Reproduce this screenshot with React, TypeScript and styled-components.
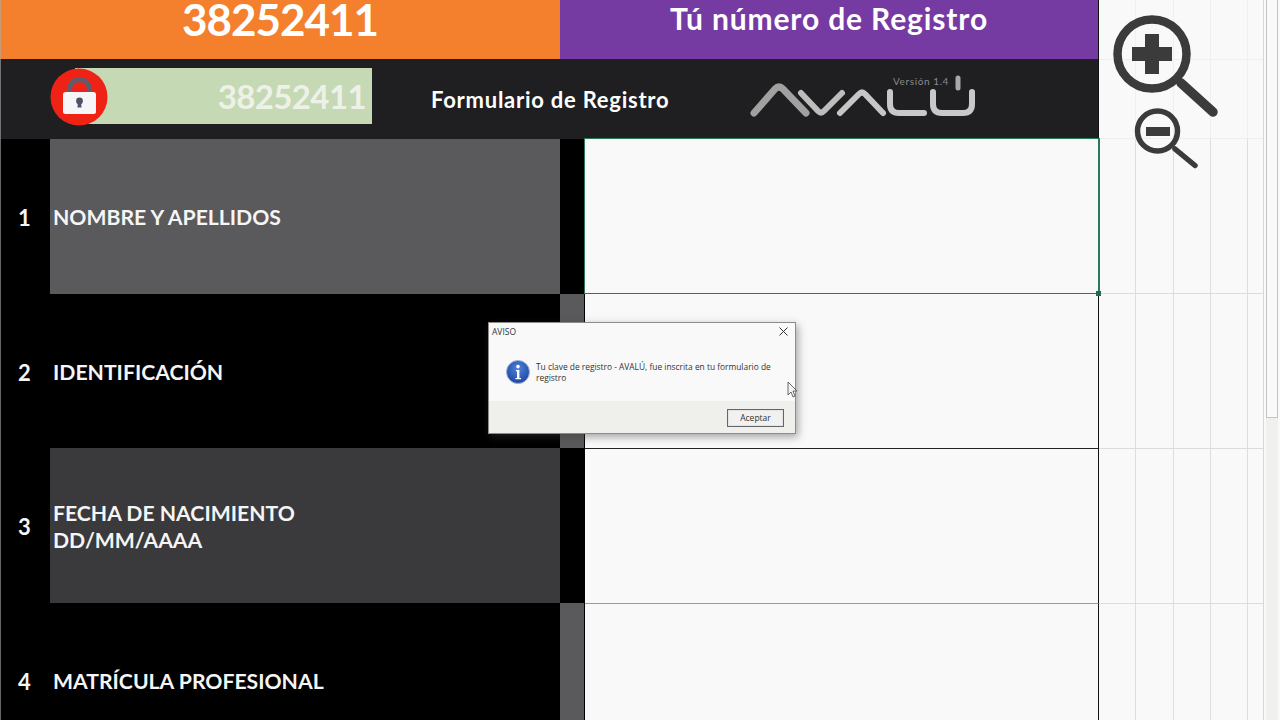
import styled, { createGlobalStyle } from 'styled-components';

const GlobalStyle = createGlobalStyle`
  html, body {
    margin: 0;
    width: 1280px;
    height: 720px;
    overflow: hidden;
    background: #f9f9f9;
    font-family: Lato, "Open Sans", sans-serif;
  }
  * { box-sizing: border-box; }
`;

const GREEN = '#2a7a5a';

const S = {
  Page: styled.div`
    position: relative;
    display: flex;
    width: 1280px;
    height: 720px;
    overflow: hidden;

    &::after {
      content: '';
      position: absolute;
      left: 0;
      top: 0;
      width: 1px;
      height: 720px;
      background: rgba(170, 170, 170, 0.6);
    }
  `,
  Main: styled.div`
    width: 1099px;
    flex: none;
    display: flex;
    flex-direction: column;
  `,
  TopBar: styled.div`
    display: grid;
    flex: none;
    grid-template-columns: 560px 1fr;
    height: 59px;
    border-right: 1px solid #111;
    color: #fff;
    font-weight: 700;
  `,
  Counter: styled.div`
    background: #f47f2c;
    font-size: 44px;
    line-height: 38px;
    text-align: center;
    letter-spacing: -1px;
  `,
  TopTitle: styled.div`
    background: #763aa3;
    font-size: 30px;
    line-height: 37px;
    text-align: center;
    letter-spacing: 0.85px;
  `,
  Header: styled.div`
    display: flex;
    flex: none;
    align-items: center;
    height: 80px;
    padding-bottom: 6px;
    border-right: 1px solid #111;
    background: #1f1e20;
    color: #fff;
  `,
  Field: styled.div`
    position: relative;
    width: 297px;
    height: 56px;
    margin-left: 75px;
    padding-right: 6px;
    background: #c6d9b5;
    color: #eef1e8;
    font-size: 33px;
    font-weight: 700;
    line-height: 56px;
    letter-spacing: -0.6px;
    text-align: right;
  `,
  LockBadge: styled.svg`
    position: absolute;
    left: -25px;
    top: 0;
    width: 58px;
    height: 58px;
  `,
  FormTitle: styled.div`
    margin: 6px 0 0 59px;
    width: 240px;
    font-size: 22px;
    font-weight: 700;
    letter-spacing: 0.75px;
    white-space: nowrap;
  `,
  Logo: styled.svg`
    margin: 4px 0 0 69px;
    width: 250px;
    height: 60px;
    flex: none;
  `,
  Row: styled.div<{ $h: number }>`
    display: grid;
    flex: none;
    grid-template-columns: 50px 510px 24px 1fr;
    height: ${(p) => p.$h}px;
    background: #000;
    color: #f5f5f5;
  `,
  Num: styled.div`
    display: flex;
    align-items: center;
    padding: 2px 0 0 18px;
    font-size: 22px;
    font-weight: 700;
  `,
  Label: styled.div<{ $bg: string }>`
    display: flex;
    align-items: center;
    padding: 2px 0 0 3px;
    background: ${(p) => p.$bg};
    font-size: 21.2px;
    font-weight: 700;
    line-height: 27px;
    white-space: pre-line;
  `,
  Gutter: styled.div<{ $bg: string }>`
    background: ${(p) => p.$bg};
  `,
  Input: styled.div<{ $edge: string }>`
    margin-left: 1px;
    background: #f9f9f9;
    border-right: 1px solid #111;
    border-top: 1px solid ${(p) => p.$edge};
  `,
  SelectedInput: styled.div`
    position: relative;
    margin-top: -1px;
    background: #f9f9f9;
    border: 1px solid ${GREEN};
    box-shadow: 1px 0 0 ${GREEN};
  `,
  Handle: styled.span`
    position: absolute;
    right: -3px;
    bottom: -3px;
    width: 5px;
    height: 5px;
    background: #1f6b4c;
  `,
  Side: styled.div`
    flex: 1;
    display: flex;
    flex-direction: column;
  `,
  SideRow: styled.div<{ $h: number; $faint?: boolean }>`
    display: grid;
    flex: none;
    grid-template-columns: 37px 38px 37px 37px 15px;
    height: ${(p) => p.$h}px;
    border-bottom: 1px solid ${(p) => (p.$faint ? '#eeeeee' : '#dcdcdc')};
    margin-right: 17px;
  `,
  SideCell: styled.div<{ $faint?: boolean }>`
    border-right: 1px solid ${(p) => (p.$faint ? '#f0f0f0' : '#dedede')};
  `,
  Scrollbar: styled.div`
    position: absolute;
    right: 0;
    top: 0;
    width: 17px;
    height: 720px;
    display: flex;
    flex-direction: column;
    padding: 0 2px;
    background: #f9f9f9;
    border-left: 1px solid #d8d8d8;
  `,
  Thumb: styled.div`
    flex: none;
    height: 418px;
    background: #f9f9f9;
    border: 1px solid #c4c4c4;
    border-top: none;
  `,
  Track: styled.div`
    flex: 1;
    background: #f0f0ee;
  `,
  ZoomIcons: styled.svg`
    position: absolute;
    left: 1100px;
    top: 0;
    width: 130px;
    height: 180px;
  `,
  Dialog: styled.div`
    position: absolute;
    left: 488px;
    top: 322px;
    width: 308px;
    height: 112px;
    display: flex;
    flex-direction: column;
    background: #f9f9f9;
    border: 1px solid #8c8c8c;
    box-shadow: 2px 3px 8px rgba(60, 60, 60, 0.45);
    font-family: "Open Sans", "Noto Sans", sans-serif;
    color: #333;
  `,
  DialogTitle: styled.div`
    display: flex;
    flex: none;
    align-items: center;
    justify-content: space-between;
    height: 17px;
    padding: 0 7px 0 3px;
    font-size: 8.5px;
  `,
  DialogBody: styled.div`
    flex: 1;
    display: flex;
    align-items: flex-start;
    gap: 6px;
    padding: 20px 20px 0 17px;
    font-size: 8.4px;
    line-height: 10.5px;
  `,
  InfoIcon: styled.svg`
    width: 24px;
    height: 24px;
    flex: none;
  `,
  Message: styled.div`
    padding-top: 2px;
  `,
  DialogFooter: styled.div`
    display: flex;
    flex: none;
    justify-content: flex-end;
    align-items: flex-start;
    height: 32px;
    padding: 8px 11px 0 0;
    background: #efefec;
  `,
  OkButton: styled.div`
    width: 57px;
    height: 18px;
    border: 1px solid #666;
    box-shadow: inset 0 0 0 1px #e4e4e4;
    background: #f1f1f1;
    font-size: 8.5px;
    line-height: 16px;
    text-align: center;
  `,
  Cursor: styled.svg`
    position: absolute;
    left: 787px;
    top: 381px;
    width: 11px;
    height: 17px;
  `,
};

const rows = [
  { n: 1, label: 'NOMBRE Y APELLIDOS', h: 155, bg: '#5a595b', gutter: '#000', edge: GREEN, selected: true },
  { n: 2, label: 'IDENTIFICACIÓN', h: 154, bg: '#000', gutter: '#5a595b', edge: 'transparent' },
  { n: 3, label: 'FECHA DE NACIMIENTO\nDD/MM/AAAA', h: 155, bg: '#3a393b', gutter: '#000', edge: '#222' },
  { n: 4, label: 'MATRÍCULA PROFESIONAL', h: 155, bg: '#000', gutter: '#5a595b', edge: '#9a9a9a' },
];

const sideRows = [
  { h: 60, faint: true },
  { h: 79, faint: true },
  { h: 155 },
  { h: 155 },
  { h: 155 },
  { h: 155 },
];

const LockIcon = () => (
  <S.LockBadge viewBox="0 0 58 58">
    <circle cx="29" cy="29" r="28.5" fill="#ee2316" />
    <path d="M19.5 26v-4.5a10 10 0 0 1 20 0V26" fill="none" stroke="#5f5c70" strokeWidth="5" />
    <rect x="13" y="24" width="33" height="22" rx="2.5" fill="#f6f6f8" />
    <circle cx="29.5" cy="33" r="3.4" fill="#4d5266" />
    <path d="M28.1 34h2.8l.7 5.5h-4.2z" fill="#4d5266" />
  </S.LockBadge>
);

const AvaluLogo = () => (
  <S.Logo viewBox="0 0 250 60">
    <g fill="none" strokeLinecap="round" strokeLinejoin="round" strokeWidth="6">
      <path d="M14 45 35 21q4-4 8 0l23 24" stroke="#a1a1a1" strokeWidth="7" />
      <path d="M61 25 78 43q3 3 6 0l18-18" stroke="#bdbdbd" />
      <path d="M100 45 119 26q3-3 6 0l18 19" stroke="#c6c6c6" />
      <path d="M150 24v12q0 9 9 9h25" stroke="#c8c8c8" />
      <path d="M193 24v12q0 9 9 9h21q9 0 9-9V24" stroke="#c8c8c8" />
      <path d="M218 10v10" stroke="#a8a8a8" strokeWidth="5" />
    </g>
    <text x="153" y="17" fontFamily="Lato, sans-serif" fontSize="10" letterSpacing="0.6" fill="#8a8a8a">
      Versión 1.4
    </text>
  </S.Logo>
);

const ZoomGlyphs = () => (
  <S.ZoomIcons viewBox="0 0 130 180">
    <g fill="none" stroke="#3b3b3b" strokeLinecap="round">
      <circle cx="52" cy="54" r="34.5" strokeWidth="8.5" />
      <path d="M81 83l32 29" strokeWidth="9.5" />
      <circle cx="57.5" cy="131" r="20" strokeWidth="5.5" />
      <path d="M75 149l20 16.5" strokeWidth="5.5" />
    </g>
    <path d="M45 34h14v13h13v14H59v13H45V61H32V47h13z" fill="#3b3b3b" />
    <rect x="46" y="127" width="24" height="9" fill="#3b3b3b" />
  </S.ZoomIcons>
);

const InfoGlyph = () => (
  <S.InfoIcon viewBox="0 0 24 24">
    <defs>
      <radialGradient id="infoFill" cx="50%" cy="35%" r="70%">
        <stop offset="0%" stopColor="#4f86dc" />
        <stop offset="100%" stopColor="#173f9c" />
      </radialGradient>
    </defs>
    <circle cx="12" cy="12" r="11.5" fill="url(#infoFill)" stroke="#9fb4d6" strokeWidth="1" />
    <circle cx="12" cy="6.6" r="1.8" fill="#fff" />
    <path d="M10 10h3.4v8H15v1.2H9.4V18H11v-6.8h-1z" fill="#fff" />
  </S.InfoIcon>
);

const CloseGlyph = () => (
  <svg width="9" height="9" viewBox="0 0 9 9">
    <path d="M.5.5l8 8M8.5.5l-8 8" stroke="#333" strokeWidth="1" fill="none" />
  </svg>
);

const App = () => {
  return (
    <S.Page>
      <GlobalStyle />
      <S.Main>
        <S.TopBar>
          <S.Counter>38252411</S.Counter>
          <S.TopTitle>Tú número de Registro</S.TopTitle>
        </S.TopBar>
        <S.Header>
          <S.Field>
            <LockIcon />
            38252411
          </S.Field>
          <S.FormTitle>Formulario de Registro</S.FormTitle>
          <AvaluLogo />
        </S.Header>
        {rows.map((r) => (
          <S.Row key={r.n} $h={r.h}>
            <S.Num>{r.n}</S.Num>
            <S.Label $bg={r.bg}>{r.label}</S.Label>
            <S.Gutter $bg={r.gutter} />
            {r.selected ? (
              <S.SelectedInput>
                <S.Handle />
              </S.SelectedInput>
            ) : (
              <S.Input $edge={r.edge} />
            )}
          </S.Row>
        ))}
      </S.Main>
      <S.Side>
        {sideRows.map((r, i) => (
          <S.SideRow key={i} $h={r.h} $faint={r.faint}>
            {[0, 1, 2, 3].map((c) => (
              <S.SideCell key={c} $faint={r.faint} />
            ))}
          </S.SideRow>
        ))}
      </S.Side>
      <S.Scrollbar>
        <S.Thumb />
        <S.Track />
      </S.Scrollbar>
      <ZoomGlyphs />
      <S.Dialog>
        <S.DialogTitle>
          <span>AVISO</span>
          <CloseGlyph />
        </S.DialogTitle>
        <S.DialogBody>
          <InfoGlyph />
          <S.Message>Tu clave de registro - AVALÚ, fue inscrita en tu formulario de registro</S.Message>
        </S.DialogBody>
        <S.DialogFooter>
          <S.OkButton>Aceptar</S.OkButton>
        </S.DialogFooter>
      </S.Dialog>
      <S.Cursor viewBox="0 0 11 17">
        <path d="M1 1v13l3-3 2 5 2-1-2-5h4z" fill="#f4f4f4" stroke="#444" strokeWidth="0.8" />
      </S.Cursor>
    </S.Page>
  );
};

export default App;
